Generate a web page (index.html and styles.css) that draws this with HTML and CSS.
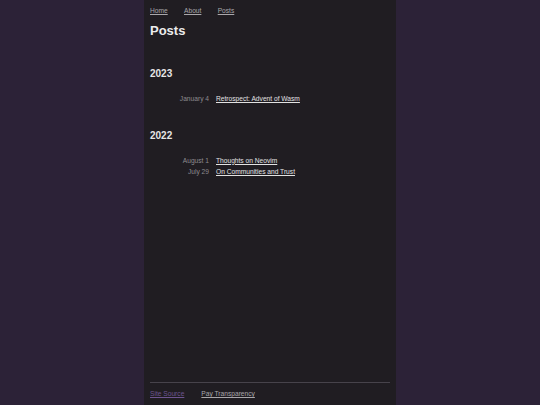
FILE: index.html
```html
<!DOCTYPE html>
<html lang="en">
<head>
<meta charset="utf-8">
<title>Posts</title>
<link rel="stylesheet" href="styles.css">
</head>
<body>
<div class="page">
  <nav class="nav">
    <a href="#">Home</a>
    <a href="#">About</a>
    <a href="#">Posts</a>
  </nav>
  <main class="main">
    <h1 class="title">Posts</h1>
    <section class="year">
      <h2 class="year-title">2023</h2>
      <ul class="posts">
        <li class="post"><span class="date">January 4</span><a class="post-link" href="#">Retrospect: Advent of Wasm</a></li>
      </ul>
    </section>
    <section class="year year-next">
      <h2 class="year-title">2022</h2>
      <ul class="posts">
        <li class="post"><span class="date">August 1</span><a class="post-link" href="#">Thoughts on Neovim</a></li>
        <li class="post"><span class="date">July 29</span><a class="post-link" href="#">On Communities and Trust</a></li>
      </ul>
    </section>
  </main>
  <footer class="footer">
    <div class="rule"></div>
    <div class="footer-links">
      <a class="visited" href="#">Site Source</a>
      <a href="#">Pay Transparency</a>
    </div>
  </footer>
</div>
</body>
</html>
```

FILE: styles.css
```css
html, body {
  margin: 0;
  padding: 0;
  height: 100%;
}
body {
  background: #2c2237;
  font-family: "Liberation Sans", Arial, sans-serif;
  font-size: 6.65px;
  color: #d8d8d8;
}
.page {
  width: 252px;
  margin: 0 auto;
  padding: 0 6px;
  min-height: 100vh;
  box-sizing: border-box;
  background: #201d22;
  display: flex;
  flex-direction: column;
}
.nav {
  margin-top: 6.7px;
  line-height: 8px;
  display: flex;
  gap: 16.3px;
}
.nav a {
  color: #a9a7ab;
  text-decoration: underline;
}
.main {
  flex: 0 0 auto;
}
.title {
  margin: 8.3px 0 0;
  font-size: 13px;
  line-height: 15px;
  font-weight: bold;
  color: #ececec;
}
.year {
  margin-top: 30.2px;
}
.year-next {
  margin-top: 25.6px;
}
.year-title {
  margin: 0 0 13px;
  font-size: 10px;
  line-height: 12px;
  font-weight: bold;
  color: #e6e6e6;
}
.posts {
  list-style: none;
  margin: 0;
  padding: 0;
}
.post {
  display: grid;
  grid-template-columns: 59px auto;
  column-gap: 7px;
  line-height: 11px;
}
.date {
  text-align: right;
  color: #8d8b8f;
}
.post-link {
  color: #e2e2e2;
  text-decoration: underline;
  justify-self: start;
}
.footer {
  margin-top: auto;
  padding-bottom: 6.6px;
}
.rule {
  height: 1px;
  background: #47434b;
}
.footer-links {
  margin-top: 7.4px;
  line-height: 8px;
  display: flex;
  gap: 17px;
}
.footer-links a {
  color: #a9a7ab;
  text-decoration: underline;
}
.footer-links a.visited {
  color: #6e5591;
}
```
